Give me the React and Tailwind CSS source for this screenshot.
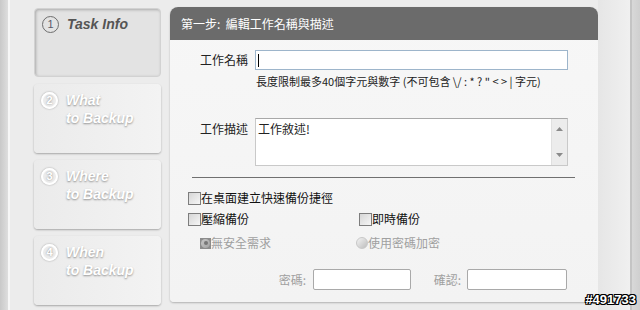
import React from "react";

const cjk = { fontFamily: '"Noto Sans CJK TC", "Noto Sans", sans-serif' };
const lat = { fontFamily: '"Liberation Sans", Arial, sans-serif' };

function Checkbox() {
  return (
    <span className="inline-block w-[13px] h-[13px] border border-[#7d7d7d] bg-gradient-to-br from-[#d6d6d6] to-[#f6f6f6] shrink-0" />
  );
}

function Radio({ checked }) {
  return checked ? (
    <span className="inline-flex items-center justify-center w-[11px] h-[11px] bg-[#8c8c8c] shrink-0">
      <span className="w-[9px] h-[9px] rounded-full bg-gradient-to-br from-[#c8c8c8] to-[#a4a4a4] flex items-center justify-center">
        <span className="w-[4px] h-[4px] rounded-full bg-[#777]" />
      </span>
    </span>
  ) : (
    <span className="inline-block w-[12px] h-[12px] rounded-full bg-gradient-to-br from-[#f4f4f4] to-[#bdbdbd] border border-[#c8c8c8] shrink-0" />
  );
}

function StepCard({ n, lines, active }) {
  if (active) {
    return (
      <div className="h-[69px] rounded-[4px] bg-[#e3e3e3] shadow-[inset_1px_1px_3px_rgba(0,0,0,0.25)] border border-[#d2d2d2] pt-[7px] pl-[7px] flex items-start gap-[8px]">
        <span className="w-[17px] h-[17px] rounded-full border-[1.5px] border-[#6e6e6e] text-[#5a5a6a] text-[11px] leading-none flex items-center justify-center" style={lat}>
          {n}
        </span>
        <span className="text-[14px] font-bold italic text-[#555] leading-[17px]" style={lat}>
          {lines[0]}
        </span>
      </div>
    );
  }
  return (
    <div className="h-[69px] rounded-[4px] bg-gradient-to-r from-[#ebebeb] to-[#f3f3f3] shadow-[0_1px_2px_rgba(0,0,0,0.3)] pt-[7px] pl-[7px] flex items-start gap-[8px]">
      <span className="mt-[1px] w-[17px] h-[17px] rounded-full border-[2px] border-white text-white text-[11px] font-bold leading-none flex items-center justify-center shadow-[0_0_2px_rgba(0,0,0,0.35)] [text-shadow:0_0_2px_rgba(0,0,0,0.45)]" style={lat}>
        {n}
      </span>
      <span className="text-[14px] font-bold italic text-white leading-[18px] [text-shadow:0_1px_2px_rgba(0,0,0,0.4)]" style={lat}>
        {lines[0]}
        <br />
        {lines[1]}
      </span>
    </div>
  );
}

export default function App() {
  return (
    <div className="w-[640px] h-[310px] flex bg-[#ececec] overflow-hidden relative" style={cjk}>
      <div className="w-[8px] bg-gradient-to-r from-[#c9c9c9] to-[#dedede]" />
      <div className="w-[2px] bg-[#f7f7f7]" />
      <div className="w-[24px] bg-[#ececec]" />
      <div className="w-[127px] flex flex-col gap-[7px] pt-[8px]">
        <StepCard n="1" lines={["Task Info"]} active />
        <StepCard n="2" lines={["What", "to Backup"]} />
        <StepCard n="3" lines={["Where", "to Backup"]} />
        <StepCard n="4" lines={["When", "to Backup"]} />
      </div>
      <div className="w-[9px]" />
      <div className="w-[428px] mt-[7px] mb-[8px] rounded-t-[8px] rounded-b-[4px] bg-gradient-to-b from-[#f7f7f7] to-[#f3f3f3] shadow-[0_1px_2px_rgba(0,0,0,0.25)] flex flex-col overflow-hidden">
        <div className="h-[33px] bg-[#6b6b6b] pl-[11px] flex items-center text-white text-[12px]">
          第一步:&nbsp;&nbsp;編輯工作名稱與描述
        </div>
        <div className="flex items-center mt-[10px]">
          <div className="w-[78px] text-right text-[12px] text-[#222]">工作名稱</div>
          <div className="ml-[7px] w-[313px] h-[20px] border border-[#9db5cb] bg-white flex items-center pl-[2px]">
            <span className="w-px h-[13px] bg-black" />
          </div>
        </div>
        <div className="ml-[86px] mt-[4px] text-[11px] leading-[14px] text-[#222] whitespace-nowrap">
          長度限制最多40個字元與數字 (不可包含 \/ : * ? " &lt; &gt; | 字元)
        </div>
        <div className="flex items-start mt-[30px]">
          <div className="w-[78px] text-right text-[12px] text-[#222] mt-[2px]">工作描述</div>
          <div className="ml-[7px] w-[313px] h-[48px] border border-[#c9c9c9] border-t-[#a8a8a8] bg-white flex">
            <div className="flex-1 pl-[2px] pt-[2px] text-[12px] text-[#222] leading-[16px]">工作敘述!</div>
            <div className="w-[16px] bg-[#ececec] border-l border-[#e0e0e0] flex flex-col items-center justify-between py-[8px]">
              <svg width="7" height="4" viewBox="0 0 7 4"><path d="M0 4 L3.5 0 L7 4 Z" fill="#8a8a8a" /></svg>
              <svg width="7" height="4" viewBox="0 0 7 4"><path d="M0 0 L3.5 4 L7 0 Z" fill="#8a8a8a" /></svg>
            </div>
          </div>
        </div>
        <div className="ml-[22px] mt-[11px] w-[383px] h-px bg-[#707070]" />
        <div className="ml-[18px] mt-[13px] flex items-center text-[12px] text-[#111] leading-[14px]">
          <Checkbox />
          <span>在桌面建立快速備份捷徑</span>
        </div>
        <div className="ml-[18px] mt-[7px] flex items-center text-[12px] text-[#111] leading-[14px]">
          <div className="w-[171px] flex items-center">
            <Checkbox />
            <span>壓縮備份</span>
          </div>
          <Checkbox />
          <span>即時備份</span>
        </div>
        <div className="ml-[30px] mt-[10px] flex items-center text-[12px] text-[#a0a0a0] leading-[14px]">
          <div className="w-[156px] flex items-center">
            <Radio checked />
            <span>無安全需求</span>
          </div>
          <Radio />
          <span>使用密碼加密</span>
        </div>
        <div className="mt-[19px] flex items-center text-[12px] text-[#a0a0a0]">
          <div className="w-[136px] text-right">密碼:</div>
          <div className="ml-[7px] w-[98px] h-[21px] border border-[#a9a9a9] rounded-[2px] bg-white" />
          <div className="w-[50px] text-right">確認:</div>
          <div className="ml-[6px] w-[100px] h-[21px] border border-[#a9a9a9] rounded-[2px] bg-white" />
        </div>
      </div>
      <div className="w-[32px] bg-gradient-to-r from-[#e6e6e6] to-[#f0f0f0]" />
      <div className="w-[2px] bg-[#c4c4c4]" />
      <div className="w-[8px] bg-gradient-to-r from-[#d8d8d8] to-[#cfcfcf]" />
      <div className="absolute right-[4px] bottom-[4px] text-[13px] font-bold text-white leading-none [text-shadow:1px_0_0_#000,-1px_0_0_#000,0_1px_0_#000,0_-1px_0_#000,1px_1px_0_#000,-1px_-1px_0_#000,1px_-1px_0_#000,-1px_1px_0_#000]" style={lat}>
        #491733
      </div>
    </div>
  );
}
